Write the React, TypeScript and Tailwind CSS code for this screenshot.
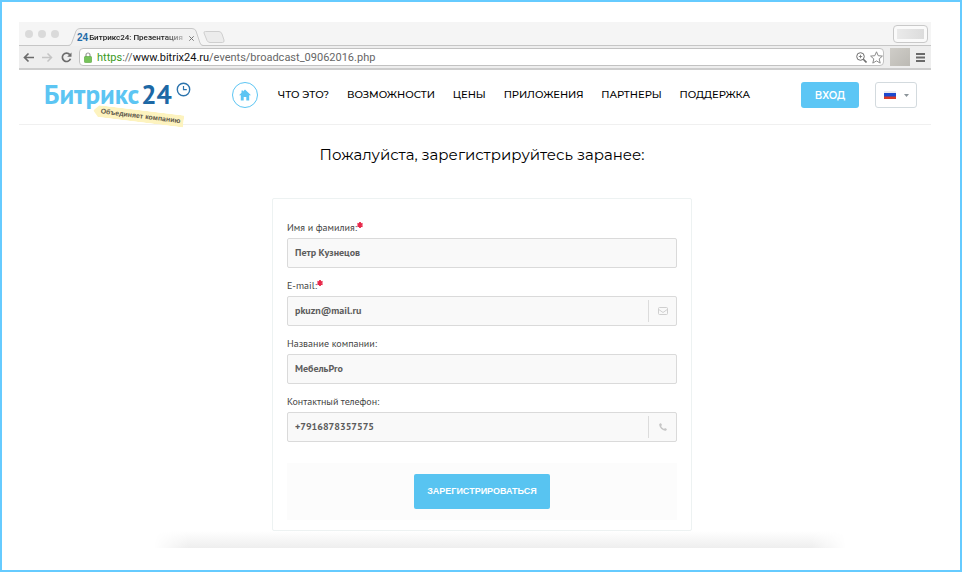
import { useState } from 'react'
import type { InputHTMLAttributes, ReactNode } from 'react'

const NAV_ITEMS = ['ЧТО ЭТО?', 'ВОЗМОЖНОСТИ', 'ЦЕНЫ', 'ПРИЛОЖЕНИЯ', 'ПАРТНЕРЫ', 'ПОДДЕРЖКА']

function TabStrip() {
  return (
    <div className="flex h-6 items-end border-b border-[#c6c6c6] bg-[#f5f5f5]">
      <div className="flex gap-[5px] self-center pl-1.5">
        <span className="h-2 w-2 rounded-full bg-[#dadada]" />
        <span className="h-2 w-2 rounded-full bg-[#dadada]" />
        <span className="h-2 w-2 rounded-full bg-[#dadada]" />
      </div>

      {/* Активная вкладка */}
      <div className="relative -mb-px ml-2 flex h-[18px] w-[136px] items-center">
        <svg className="absolute inset-0 h-full w-full" viewBox="0 0 136 18" fill="none">
          <path d="M0 18C3 18 4 17 5 14L9 3Q10 .5 13 .5H125Q128 .5 129 3L133 15Q134 18 136 18Z" fill="#f1f1f1" />
          <path d="M0 17.5C3 17.5 4 17 5 14L9 3Q10 .5 13 .5H125Q128 .5 129 3L133 15Q134 17.5 136 17.5" stroke="#c8c8c8" />
        </svg>
        <div className="relative flex items-center pt-0.5 pl-2.5">
          <span className="font-['Liberation_Sans',Arial,sans-serif] text-[10px] leading-4 font-bold text-[#1f6ba8]">24</span>
          <span className="ml-px font-[Roboto,sans-serif] text-[8px] leading-4 font-medium whitespace-nowrap text-[#222] [mask-image:linear-gradient(to_right,black_80%,#0004)]">
            Битрикс24: Презентация
          </span>
          <button type="button" aria-label="Закрыть вкладку" className="ml-1.5 text-[#777]">
            <svg className="h-[5px] w-[5px]" viewBox="0 0 5 5" stroke="currentColor">
              <path d="M.3.3l4.4 4.4M4.7.3L.3 4.7" />
            </svg>
          </button>
        </div>
      </div>

      <svg className="mb-0.5 h-3 w-[22px]" viewBox="0 0 22 12">
        <path d="M1 2Q.5.5 2.5.5H16Q18 .5 19 3L21 9Q21.5 11.5 19.5 11.5H7Q5 11.5 4 9.500Z" fill="#ececec" stroke="#cfcfcf" />
      </svg>

      <div className="mr-[3px] mb-0.5 ml-auto h-[18px] w-[35px] rounded-sm border border-[#c9c9c9] bg-[#fafafa] p-[3px]">
        <div className="h-full bg-linear-to-r from-[#eaeaea] to-[#dcdcdc]" />
      </div>
    </div>
  )
}

function AddressBar() {
  return (
    <div className="flex h-6 items-center border-b-2 border-[#cdcdcd] bg-[#eeeeee] pr-1.5 pl-1">
      <div className="flex items-center gap-2">
        <button type="button" aria-label="Назад">
          <svg className="h-[11px] w-[11px]" viewBox="0 0 11 11" fill="none" stroke="#6b6b6b" strokeWidth="1.7">
            <path d="M5.500 1.500L1.500 5.500 5.500 9.500M1.500 5.500H11" />
          </svg>
        </button>
        <button type="button" aria-label="Вперед">
          <svg className="h-[11px] w-[11px]" viewBox="0 0 11 11" fill="none" stroke="#c4c4c4" strokeWidth="1.500">
            <path d="M5.500 1.500l4 4L5.500 9.500M9.500 5.500H0" />
          </svg>
        </button>
        <button type="button" aria-label="Обновить">
          <svg className="h-[11px] w-[11px]" viewBox="0 0 11 11" fill="none">
            <path d="M8.800 2.600A4.200 4.200 0 1 0 9.500 6.800" stroke="#6b6b6b" strokeWidth="1.700" />
            <path d="M10.500.4v4.300H6.200z" fill="#6b6b6b" />
          </svg>
        </button>
      </div>

      <div className="ml-[7px] flex h-[18px] flex-1 items-center rounded-sm border border-[#c2c2c2] bg-white px-1">
        <svg className="h-[11px] w-2" viewBox="0 0 8 11" fill="none">
          <path d="M2 5V3a2 2 0 0 1 4 0v2" stroke="#9a9a9a" strokeWidth="1.200" />
          <rect x=".3" y="4.500" width="7.400" height="6" rx="1" fill="#76c35a" stroke="#55a33b" strokeWidth=".6" />
        </svg>
        <p className="ml-[5px] flex-1 pt-0.5 font-[Roboto,sans-serif] text-[11px] leading-4 whitespace-nowrap text-[#666]">
          <span className="text-[#3a9a1c]">https</span>://<span className="text-[#111]">www.bitrix24.ru</span>
          /events/broadcast_09062016.php
        </p>
        <svg className="h-[11px] w-[11px]" viewBox="0 0 11 11" fill="none" stroke="#6e6e6e">
          <circle cx="4.500" cy="4.500" r="3.800" />
          <path d="M7.300 7.300l3.200 3.200" strokeWidth="1.600" />
          <path d="M2.800 4.500h3.400M4.500 2.800v3.400" strokeWidth=".8" />
        </svg>
        <svg className="-mr-1 ml-[3px] h-[13px] w-[13px]" viewBox="0 0 13 13" fill="none" stroke="#8a8a8a" strokeLinejoin="round">
          <path d="M6.500.8l1.700 3.900 4.200.4-3.200 2.800 1 4.200-3.700-2.200-3.700 2.200 1-4.200L.6 5.100l4.200-.4z" />
        </svg>
      </div>

      <div className="ml-1.5 h-[18px] w-5 bg-linear-to-br from-[#cfcdc8] to-[#bcbab4]" />
      <button type="button" aria-label="Меню" className="ml-1.5">
        <svg className="h-[9px] w-[9px]" viewBox="0 0 9 9" fill="#6a6a6a">
          <path d="M0 0h9v2H0zM0 3.500h9v2H0zM0 7h9v2H0z" />
        </svg>
      </button>
    </div>
  )
}

function Logo() {
  return (
    <a href="#" className="relative block w-[147px] font-['PT_Sans','Noto_Sans',sans-serif]">
      <span className="flex items-baseline text-[27px] leading-8 font-bold whitespace-nowrap">
        <span className="text-[#5cc5f3]">Битрикс</span>
        <span className="ml-0.5 text-[#1d68a5]">24</span>
      </span>
      <svg className="absolute top-1 right-0 h-[15px] w-[15px]" viewBox="0 0 15 15" fill="none" stroke="#2c74ad">
        <circle cx="7.500" cy="7.500" r="6.200" strokeWidth="1.400" />
        <path d="M7.500 4v3.700h3.300" strokeWidth="1.200" />
      </svg>
      <span className="absolute top-8 left-[49px] flex h-3 w-[91px] rotate-[7deg] items-center justify-center bg-[#fdf3bf] pl-1 font-['Liberation_Sans',Arial,sans-serif] text-[7px] leading-3 font-bold whitespace-nowrap text-[#5d584a] [clip-path:polygon(6%_0,100%_0,100%_100%,6%_100%,0_50%)]">
        Объединяет компанию
      </span>
    </a>
  )
}

function SiteHeader() {
  return (
    <header className="flex h-[55px] items-start border-b border-[#f0f0f0] pr-3.5 pl-[25px] font-[Montserrat,Lato,'Noto_Sans',sans-serif]">
      <div className="pt-2">
        <Logo />
      </div>
      <a
        href="#"
        aria-label="Главная"
        className="mt-3 ml-[41px] flex h-[26px] w-[26px] shrink-0 items-center justify-center rounded-full border border-[#5cc5f3]"
      >
        <svg className="h-3 w-3" viewBox="0 0 12 12" fill="#5cc5f3">
          <path d="M6 .5l6 5.700h-1.800V11.500H7.300V8H4.700v3.500H1.800V6.200H0l2.500-2.400V1.500H4v1z" />
        </svg>
      </a>
      <nav className="mt-[17px] ml-5 flex max-w-[472px] flex-1 justify-between text-[10px] leading-4 font-medium whitespace-nowrap text-black">
        {NAV_ITEMS.map((item) => (
          <a key={item} href="#">
            {item}
          </a>
        ))}
      </nav>
      <a
        href="#"
        className="mt-3 ml-auto flex h-[26px] w-[58px] items-center justify-center rounded-[3px] bg-[#5cc6f5] text-[10px] font-semibold text-white"
      >
        ВХОД
      </a>
      <button
        type="button"
        aria-label="Выбрать язык"
        className="mt-3 ml-4 flex h-[26px] w-[42px] items-center justify-center gap-2 rounded-[3px] border border-[#d3dade] bg-white"
      >
        <svg className="h-2 w-3" viewBox="0 0 12 8">
          <path fill="#e9eaf0" d="M0 0h12v3H0z" />
          <path fill="#1d49cf" d="M0 2h12v4H0z" />
          <path fill="#d93a26" d="M0 5.500h12V8H0z" />
        </svg>
        <svg className="h-[3px] w-[5px]" viewBox="0 0 5 3" fill="#8b9499">
          <path d="M0 0h5L2.500 3z" />
        </svg>
      </button>
    </header>
  )
}

interface FieldProps extends InputHTMLAttributes<HTMLInputElement> {
  id: string
  label: string
  icon?: ReactNode
}

function Field({ id, label, icon, required, ...inputProps }: FieldProps) {
  return (
    <div>
      <label htmlFor={id} className="flex h-5 items-center text-[10px] leading-5 text-[#444]">
        {label}:
        {required && (
          <svg className="mb-1.5 h-1.5 w-1.5" viewBox="0 0 6 6" stroke="#e8284a" strokeWidth="1.800">
            <path d="M3 0v6M.4 1.500l5.200 3M5.600 1.500l-5.200 3" />
          </svg>
        )}
      </label>
      <div className="mb-2 flex h-[30px] items-center rounded-xs border border-[#dadada] bg-[#f9f9f9]">
        <input
          id={id}
          className="h-full min-w-0 flex-1 bg-transparent px-[7px] pb-0.5 text-[10px] font-bold text-[#5c5c5c] outline-none"
          {...inputProps}
        />
        {icon && (
          <span className="flex h-[22px] w-7 items-center justify-center border-l border-[#dcdcdc]">{icon}</span>
        )}
      </div>
    </div>
  )
}

export default function App() {
  const [form, setForm] = useState({
    name: 'Петр Кузнецов',
    email: 'pkuzn@mail.ru',
    company: 'МебельPro',
    phone: '+7916878357575',
  })

  const update = (key: keyof typeof form) => (e: React.ChangeEvent<HTMLInputElement>) =>
    setForm({ ...form, [key]: e.target.value })

  return (
    <div className="min-h-screen border-2 border-[#66cbff] bg-white px-[17px] pt-5 pb-[21px] font-['PT_Sans',Roboto,'Noto_Sans',sans-serif]">
      <div className="mr-3">
        <TabStrip />
        <AddressBar />
        <SiteHeader />
      </div>

      <main className="pl-0.5">
        <h1 className="mt-[18px] text-center font-[Montserrat,Lato,'Noto_Sans',sans-serif] text-[15px] leading-6 text-black">
          Пожалуйста, зарегистрируйтесь заранее:
        </h1>

        <form
          onSubmit={(e) => e.preventDefault()}
          className="mx-auto mt-[31px] max-w-[420px] rounded-xs border border-[#edf2f2] px-3.5 pt-[19px] pb-2.5"
        >
          <Field id="name" label="Имя и фамилия" required value={form.name} onChange={update('name')} />
          <Field
            id="email"
            type="email"
            label="E-mail"
            required
            value={form.email}
            onChange={update('email')}
            icon={
              <svg className="h-2 w-2.5" viewBox="0 0 10 8" fill="none" stroke="#cfcfcf">
                <rect x=".5" y=".5" width="9" height="7" rx="1" />
                <path d="M.8 2.500L5 5.500l4.200-3" />
              </svg>
            }
          />
          <Field id="company" label="Название компании" value={form.company} onChange={update('company')} />
          <Field
            id="phone"
            type="tel"
            label="Контактный телефон"
            value={form.phone}
            onChange={update('phone')}
            icon={
              <svg className="h-2 w-2" viewBox="0 0 8 8" fill="#c6c6c6">
                <path d="M1.500.2C.6.5.1 1.200.2 2c.5 3 2.800 5.300 5.800 5.800.8.1 1.500-.4 1.800-1.300V6L6 5l-1 .9C3.700 5.300 2.700 4.300 2.100 3L3 2 2 .2z" />
              </svg>
            }
          />

          <div className="mt-[21px] flex justify-center bg-[#fcfcfc] py-[11px]">
            <button
              type="submit"
              className="h-[35px] w-[136px] rounded-xs bg-[#58c4f1] font-['Liberation_Sans',Arial,sans-serif] text-[9px] font-bold text-white"
            >
              ЗАРЕГИСТРИРОВАТЬСЯ
            </button>
          </div>
        </form>

        {/* Тень под формой */}
        <div className="pl-9">
          <div className="mx-auto h-[17px] max-w-[692px] bg-linear-to-b from-white to-[#eeeeee] [mask-image:linear-gradient(to_right,transparent,black_5%,black_95%,transparent)]" />
        </div>
      </main>
    </div>
  )
}
